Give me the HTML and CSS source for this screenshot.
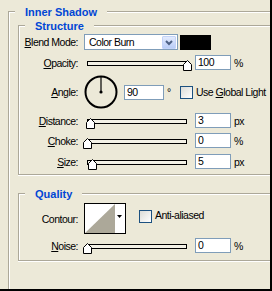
FILE: index.html
```html
<!DOCTYPE html>
<html>
<head>
<meta charset="utf-8">
<link rel="stylesheet" href="styles.css">
</head>
<body>
<div class="frame">
  <div class="group outer">
    <div class="legend">Inner Shadow</div>

    <div class="group sub structure">
      <div class="legend">Structure</div>

      <div class="row row-blend">
        <span class="label"><u>B</u>lend Mode:</span>
        <div class="combo">
          <span>Color Burn</span>
          <span class="combo-btn">
            <svg width="12" height="11" viewBox="0 0 12 11"><polyline points="3,4 6,7 9,4" fill="none" stroke="#4d6185" stroke-width="2"/></svg>
          </span>
        </div>
        <div class="swatch"></div>
      </div>

      <div class="row row-opacity">
        <span class="label"><u>O</u>pacity:</span>
        <div class="slider">
          <div class="track"></div>
          <svg class="thumb" style="--v:100" width="9" height="11" viewBox="0 0 9 11"><path d="M4.5 .5 L8.5 4.5 V10.5 H.5 V4.5 Z" fill="#fff" stroke="#000"/></svg>
        </div>
        <span class="field">100</span>
        <span class="unit">%</span>
      </div>

      <div class="row row-angle">
        <span class="label"><u>A</u>ngle:</span>
        <svg class="dial" width="34" height="34" viewBox="0 0 34 34">
          <circle cx="17" cy="17" r="15.5" fill="none" stroke="#000" stroke-width="2"/>
          <line x1="17" y1="17" x2="17" y2="2" stroke="#000" stroke-width="1.2"/>
          <circle cx="17" cy="17" r="1.6" fill="#000"/>
        </svg>
        <span class="field field-angle">90</span>
        <span class="deg">°</span>
        <span class="check"></span>
        <span class="check-label">Use <u>G</u>lobal Light</span>
      </div>

      <div class="row row-distance">
        <span class="label"><u>D</u>istance:</span>
        <div class="slider">
          <div class="track"></div>
          <svg class="thumb" style="--v:3" width="9" height="11" viewBox="0 0 9 11"><path d="M4.5 .5 L8.5 4.5 V10.5 H.5 V4.5 Z" fill="#fff" stroke="#000"/></svg>
        </div>
        <span class="field">3</span>
        <span class="unit">px</span>
      </div>

      <div class="row row-choke">
        <span class="label"><u>C</u>hoke:</span>
        <div class="slider">
          <div class="track"></div>
          <svg class="thumb" style="--v:0" width="9" height="11" viewBox="0 0 9 11"><path d="M4.5 .5 L8.5 4.5 V10.5 H.5 V4.5 Z" fill="#fff" stroke="#000"/></svg>
        </div>
        <span class="field">0</span>
        <span class="unit">%</span>
      </div>

      <div class="row row-size">
        <span class="label"><u>S</u>ize:</span>
        <div class="slider">
          <div class="track"></div>
          <svg class="thumb" style="--v:5" width="9" height="11" viewBox="0 0 9 11"><path d="M4.5 .5 L8.5 4.5 V10.5 H.5 V4.5 Z" fill="#fff" stroke="#000"/></svg>
        </div>
        <span class="field">5</span>
        <span class="unit">px</span>
      </div>
    </div>

    <div class="group sub quality">
      <div class="legend">Quality</div>

      <div class="row row-contour">
        <span class="label">Contour:</span>
        <div class="contour">
          <svg width="40" height="29" viewBox="0 0 40 29">
            <rect width="40" height="29" fill="#fff"/>
            <polygon points="0,29 30,0 30,29" fill="#aca899"/>
            <polygon points="32,11 37,11 34.5,14" fill="#000"/>
          </svg>
        </div>
        <span class="check check-aa"></span>
        <span class="check-label check-label-aa">Anti-aliased</span>
      </div>

      <div class="row row-noise">
        <span class="label"><u>N</u>oise:</span>
        <div class="slider">
          <div class="track"></div>
          <svg class="thumb" style="--v:0" width="9" height="11" viewBox="0 0 9 11"><path d="M4.5 .5 L8.5 4.5 V10.5 H.5 V4.5 Z" fill="#fff" stroke="#000"/></svg>
        </div>
        <span class="field">0</span>
        <span class="unit">%</span>
      </div>
    </div>
  </div>
</div>
</body>
</html>
```

FILE: styles.css
```css
body {
  margin: 0;
  background: #ece9d8;
}

.frame {
  width: 270px;
  height: 289px;
  border-right: 2px solid #000;
  border-bottom: 2px solid #000;
  overflow: hidden;
  background: #ece9d8;
  color: #000;
  font-family: "Liberation Sans", Arial, sans-serif;
  font-size: 10.5px;
  letter-spacing: -0.5px;
}

.group {
  border-top: 1px solid #aca899;
  border-left: 1px solid #aca899;
  box-shadow: inset 1px 1px 0 #fff;
}

.outer {
  margin: 11px 0 0 8px;
  width: 300px;
  min-height: 300px;
}

.sub {
  margin-left: 9px;
  width: 290px;
  border-bottom: 1px solid #aca899;
  box-shadow: inset 1px 1px 0 #fff, 0 1px 0 #fff;
}

.structure {
  margin-top: 6px;
  padding-bottom: 5px;
}

.quality {
  margin-top: 18px;
  padding-bottom: 7px;
}

.legend {
  width: max-content;
  margin: -6px 0 0 6px;
  padding: 0 10px;
  background: #ece9d8;
  color: #0046d5;
  letter-spacing: 0;
  font: bold 11px/13px "Liberation Sans", Arial, sans-serif;
}

.row {
  display: flex;
  align-items: center;
  height: 15px;
}

.row-blend { margin-top: 1px; height: 16px; }
.row-opacity { margin-top: 5px; }
.row-angle { margin-top: 5px; height: 34px; }
.row-distance { margin-top: 4px; }
.row-choke { margin-top: 5px; }
.row-size { margin-top: 6px; }
.row-contour { margin-top: 2px; height: 31px; }
.row-noise { margin-top: 4px; }

.label {
  width: 59px;
  flex-shrink: 0;
  text-align: right;
  white-space: nowrap;
}

.combo {
  margin-left: 6px;
  width: 94px;
  height: 16px;
  box-sizing: border-box;
  border: 1px solid #7f9db9;
  background: #fff;
  display: flex;
  align-items: center;
  justify-content: space-between;
  padding-left: 4px;
  flex-shrink: 0;
}

.combo-btn {
  width: 14px;
  height: 13px;
  margin-right: 1px;
  box-sizing: border-box;
  border: 1px solid #c3d3f8;
  border-radius: 1px;
  background: linear-gradient(#e3ebfe, #b9cdf7);
  display: flex;
  align-items: center;
  justify-content: center;
}

.swatch {
  margin-left: 2px;
  width: 31px;
  height: 15px;
  background: #000;
  flex-shrink: 0;
}

.slider {
  position: relative;
  margin-left: 6px;
  width: 107px;
  height: 15px;
  flex-shrink: 0;
}

.track {
  margin: 6px 0 0 3px;
  width: 100px;
  height: 5px;
  box-sizing: border-box;
  border: 1px solid #000;
  background: #f3f1e6;
}

.thumb {
  position: absolute;
  top: 5px;
  left: calc(var(--v) * 1px - 1px);
}

.field {
  margin-left: 4px;
  width: 36px;
  height: 15px;
  box-sizing: border-box;
  border: 1px solid #7f9db9;
  background: #fff;
  padding-left: 2px;
  line-height: 13px;
  flex-shrink: 0;
}

.unit {
  margin-left: 3px;
}

.dial {
  margin-left: 6px;
  flex-shrink: 0;
}

.field-angle {
  margin-left: 6px;
  width: 40px;
}

.deg {
  width: 16px;
  padding-left: 3px;
  box-sizing: border-box;
  flex-shrink: 0;
}

.check {
  width: 13px;
  height: 13px;
  box-sizing: border-box;
  border: 1px solid #1c5180;
  background: linear-gradient(135deg, #dcdcd7, #fff);
  flex-shrink: 0;
}

.check-label {
  margin-left: 3px;
  white-space: nowrap;
}

.contour {
  margin-left: 6px;
  width: 42px;
  height: 31px;
  box-sizing: border-box;
  border: 1px solid #000;
  flex-shrink: 0;
}

.contour svg {
  display: block;
}

.check-aa {
  margin-left: 13px;
  align-self: flex-start;
  margin-top: 7px;
}

.check-label-aa {
  align-self: flex-start;
  margin-top: 6px;
}
```
